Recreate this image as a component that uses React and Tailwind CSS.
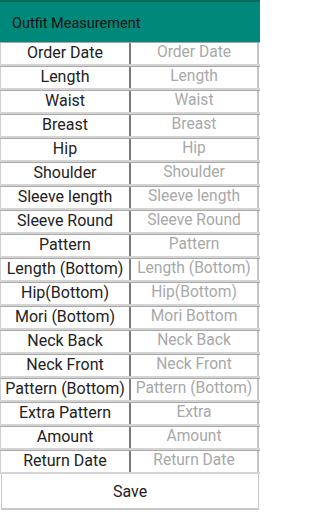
const FIELDS = [
  ['Order Date', 'Order Date'],
  ['Length', 'Length'],
  ['Waist', 'Waist'],
  ['Breast', 'Breast'],
  ['Hip', 'Hip'],
  ['Shoulder', 'Shoulder'],
  ['Sleeve length', 'Sleeve length'],
  ['Sleeve Round', 'Sleeve Round'],
  ['Pattern', 'Pattern'],
  ['Length (Bottom)', 'Length (Bottom)'],
  ['Hip(Bottom)', 'Hip(Bottom)'],
  ['Mori (Bottom)', 'Mori Bottom'],
  ['Neck Back', 'Neck Back'],
  ['Neck Front', 'Neck Front'],
  ['Pattern (Bottom)', 'Pattern (Bottom)'],
  ['Extra Pattern', 'Extra'],
  ['Amount', 'Amount'],
  ['Return Date', 'Return Date'],
]

export default function App() {
  return (
    <div className="w-[260px] h-[512px] bg-white flex flex-col font-['Roboto',sans-serif] overflow-hidden">
      {/* status strip + toolbar */}
      <div className="h-[2px] bg-[#0a6b5d]" />
      <div className="h-[40px] bg-[#00897b] flex items-center pl-3 pt-[3px]">
        <span className="text-[14.5px] text-[#111]">Outfit Measurement</span>
      </div>

      {/* form rows */}
      <div className="flex flex-col">
        {FIELDS.map(([label, hint]) => (
          <div
            key={label}
            className="h-[24px] flex border-t border-b-2 border-t-[#a8a8a8] border-b-[#d4d4d4]"
          >
            <div className="w-[129px] flex items-center justify-center pb-[2px] border-l border-[#cfcfcf] text-[16px] text-[#222] leading-none whitespace-nowrap">
              {label}
            </div>
            <div className="w-[2px] bg-[#7c7c7c]" />
            <div className="flex-1 flex items-center justify-center pb-[2px] border-r-2 border-[#c4c4c4] mr-[1px] text-[15.6px] text-[#a8a8a8] leading-none whitespace-nowrap">
              {hint}
            </div>
          </div>
        ))}
      </div>

      {/* save */}
      <button className="h-[36px] mx-[1px] border border-t-0 border-[#c8c8c8] border-b-2 bg-white text-[16px] text-[#222] pt-[2px]">
        Save
      </button>
    </div>
  )
}
